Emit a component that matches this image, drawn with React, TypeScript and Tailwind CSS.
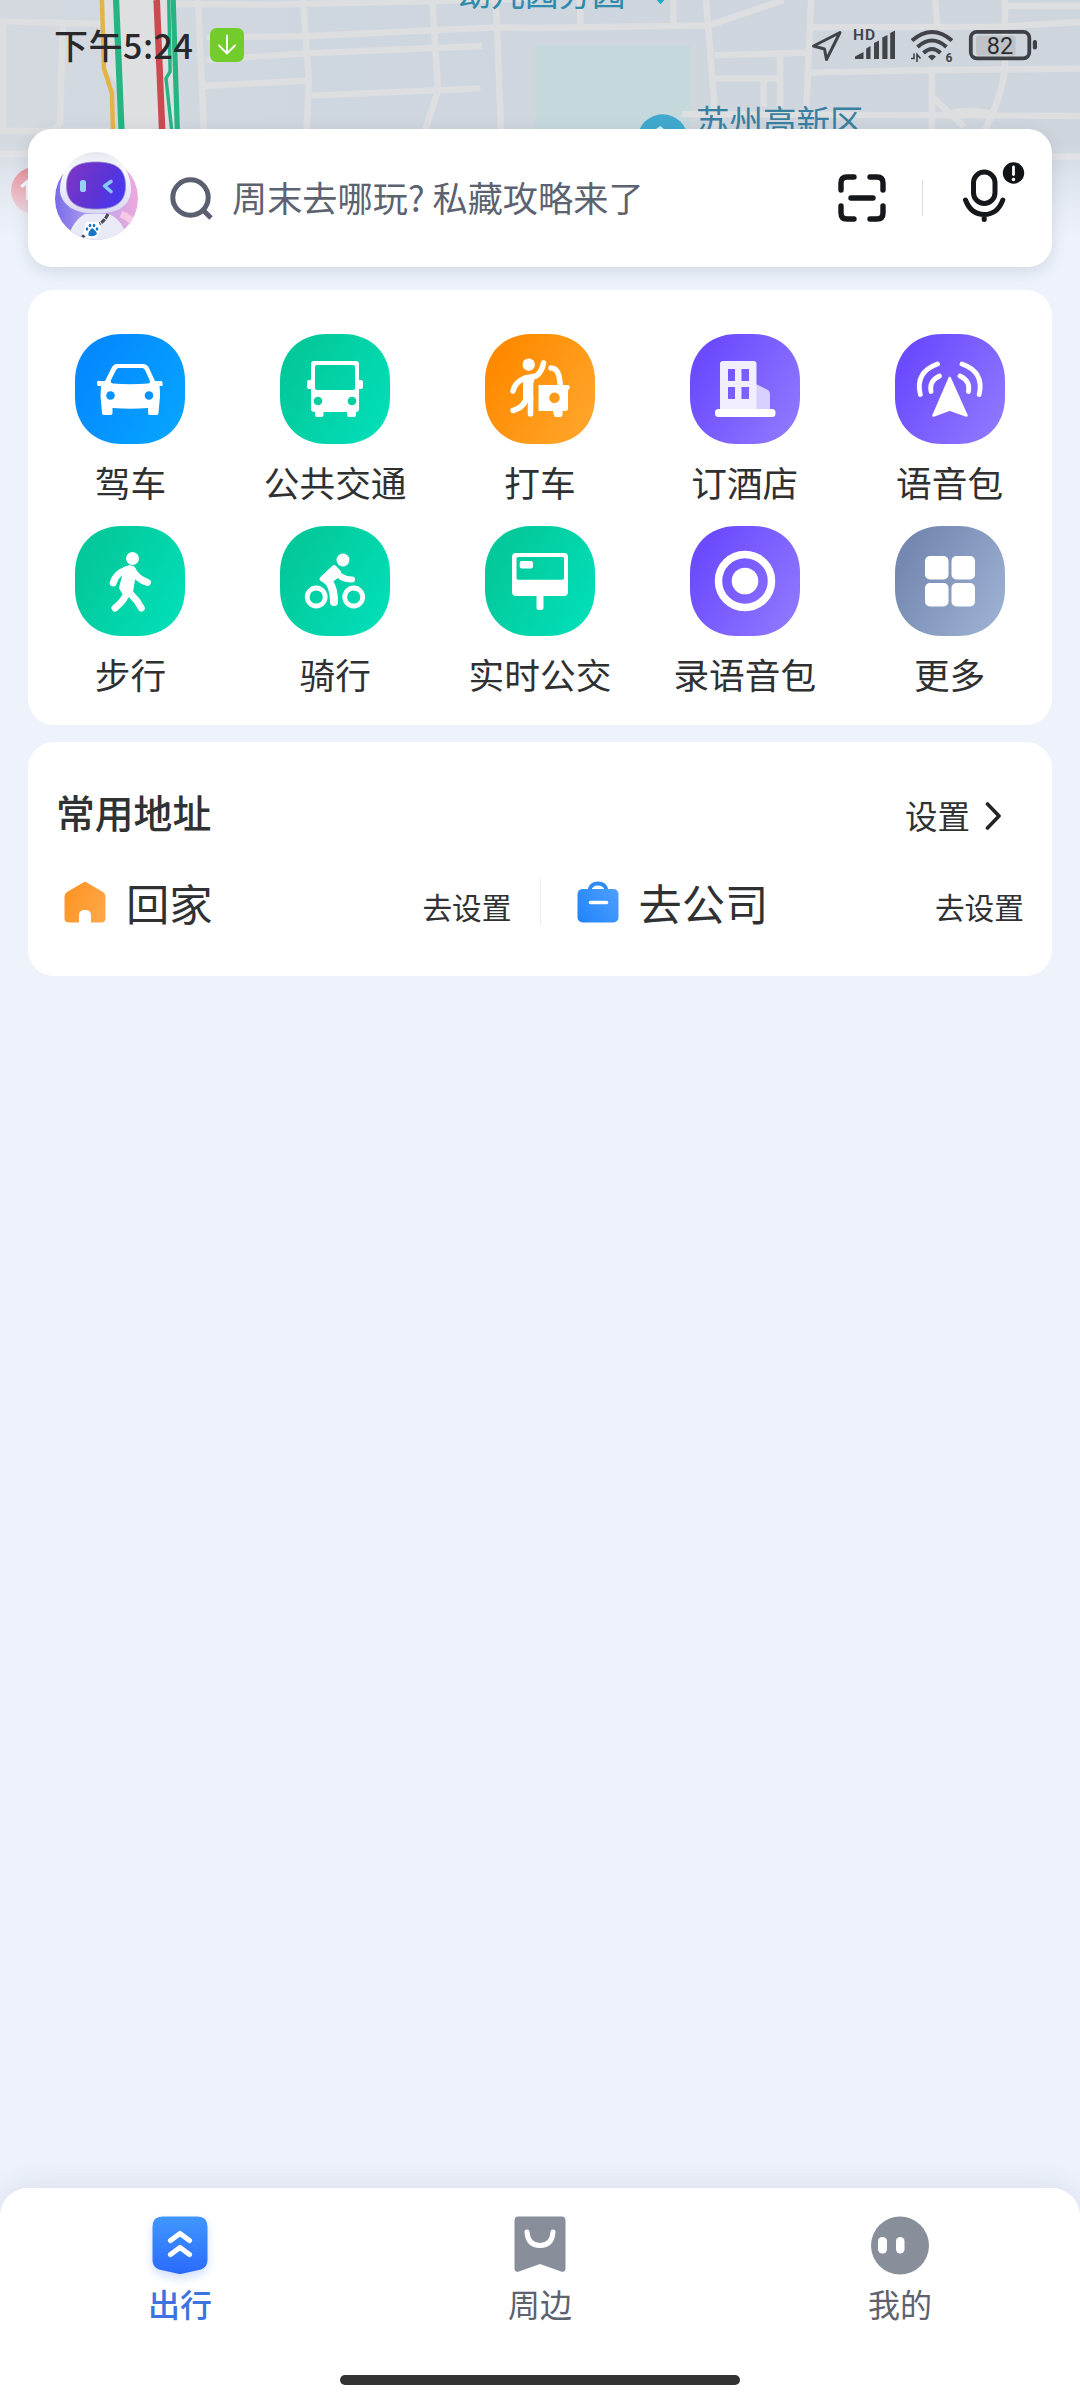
import type { ReactNode } from "react";

function MapBackdrop() {
  return (
    <div className="absolute inset-x-0 top-0 h-[280px] overflow-hidden">
      <svg className="block h-[280px] w-[1080px]" viewBox="0 0 3136 840" preserveAspectRatio="none">
        <defs>
          <linearGradient id="mapBase" x1="0" x2="1" y1="0" y2="0">
            <stop offset="0" stopColor="#d4d9df" />
            <stop offset="0.3" stopColor="#ced6df" />
            <stop offset="1" stopColor="#cfd5dd" />
          </linearGradient>
          <linearGradient id="mapFade" x1="0" x2="0" y1="0" y2="1">
            <stop offset="0" stopColor="#edf2fb" stopOpacity="0" />
            <stop offset="0.35" stopColor="#edf2fb" stopOpacity="0.5" />
            <stop offset="0.75" stopColor="#edf2fb" stopOpacity="0.85" />
            <stop offset="1" stopColor="#edf2fb" />
          </linearGradient>
        </defs>
        <rect width="3136" height="840" fill="url(#mapBase)" />
        <path d="M1546 128H2012V400H1546z" fill="#c5d8db" stroke="#d1d6dd" strokeWidth="12" />
        <path d="M300 0H510V400H350L345 260 300 200z" fill="#dedfe1" />

        {/* roads */}
        <g fill="none" stroke="#dddee0" strokeWidth="19">
          <path d="M0 64 300 72M8 70V400M182 75 175 370 150 393M0 393H320M0 462H120" />
          <path d="M510 12 800 14 1560 -4M575 0 592 400M880 0 897 240 890 400M600 112 900 108 1440 82 1560 84" />
          <path d="M600 180 890 160 1400 138M590 258 890 242M905 287 1395 265M1255 0 1272 270 1235 390" />
          <path d="M1440 0 1455 400M1560 84 2060 76 2275 0M2050 0 2080 390M1685 0V76M1955 0V76" />
          <path d="M2355 0 2342 320M2350 82 2900 80 3136 66M2075 166 2345 158M2075 236H2265M2265 166V320M2217 240V320" />
          <path d="M2350 218 2720 210 3136 206M1980 342 3136 348M2706 200V390M2715 0 2722 80M2918 0V210Q2905 300 2860 390M2706 290 2800 380M2740 345Q2820 320 2890 345M2918 18H3136M2900 470H3136" />
        </g>
        <path d="M296 0 302 205 325 280 328 395" fill="none" stroke="#e2b447" strokeWidth="13" />
        <path d="M337 0 353 395" stroke="#25b583" strokeWidth="18" />
        <path d="M455 0 471 395" stroke="#cb4a50" strokeWidth="19" />
        <path d="M503 0 515 395" stroke="#25b583" strokeWidth="15" />
        <path d="M490 0 494 215 482 235 499 395" fill="none" stroke="#25b583" strokeWidth="10" />
        <path d="M1907 0H1929L1918 13z" fill="#20a9c4" />
        <circle cx="1924" cy="415" r="72" fill="#40a9cd" />
        <path d="M1917 378 1932 390V400H1904V388z" fill="#d4edf5" />
        <circle cx="104" cy="572" r="72" fill="#e4525c" />
        <path d="M62 560 80 545V600" fill="none" stroke="#fff" strokeWidth="10" />
        <rect y="430" width="3136" height="290" fill="url(#mapFade)" />
        <rect y="719" width="3136" height="121" fill="#edf2fb" />
      </svg>
      <span className="absolute left-[458px] top-[-26px] text-[33.5px] leading-[36px] text-[#2d8bac]">幼儿园分园</span>
      <span className="absolute left-[696px] top-[102px] text-[33.5px] leading-[36px] text-[#397f9f]">苏州高新区</span>
    </div>
  );
}

function StatusBar() {
  return (
    <header className="relative flex h-[129px] items-start justify-between pl-[54px] pr-[41px] pt-7">
      <div className="flex items-center">
        <span className="w-[156px] whitespace-nowrap text-[34px] font-medium leading-[34px] tracking-[0.5px] text-[#29292b]">下午5:24</span>
        <svg width="34" height="34" viewBox="0 0 34 34">
          <rect width="34" height="34" rx="6.500" fill="#72cc2c" />
          <path d="M17 7.500V25M9 17.500 17 25.500 25 17.500" fill="none" stroke="#fff" strokeWidth="1.800" strokeLinecap="round" />
        </svg>
      </div>
      <svg width="228" height="36" viewBox="812 28 228 36" fontFamily="Roboto, sans-serif">
        <path d="M841 32.500 814.500 46 825.500 49 827.500 59.500z" fill="none" stroke="#414349" strokeWidth="3" strokeLinejoin="round" />
        <text x="854" y="40" fontSize="15.500" fontWeight="600" fill="#3f4147" letterSpacing="1">HD</text>
        <path d="M856 59V56.500L864.500 52V59zM867.200 59V48.500L871.500 46V59zM875 59V43L880 40.500V59zM883.300 59V37.500L888.500 35V59zM891.200 59V33L896 30.500V59z" fill="#414349" />
        <g fill="none" stroke="#414349" strokeWidth="4">
          <path d="M913 40.500Q933 23.500 953 40.500" />
          <path d="M918.500 47Q933 34 947.500 47" />
          <path d="M924.500 53Q933 45 941.500 53" />
        </g>
        <path d="M929 56.500Q933 53 937 56.500L933 60.500z" fill="#414349" />
        <path d="M912 58.500H915V53.500M918 62V54.500L921.500 58.500" fill="none" stroke="#414349" strokeWidth="1.600" />
        <text x="946.500" y="62" fontSize="12" fontWeight="700" fill="#414349">6</text>
        <rect x="977" y="35.500" width="39.500" height="20" rx="3" fill="#bfc2c7" />
        <rect x="971.800" y="31.800" width="58.500" height="26.500" rx="6" fill="none" stroke="#3e4046" strokeWidth="3.800" />
        <rect x="1033.800" y="40" width="4.200" height="9.500" rx="2" fill="#3e4046" />
        <text x="1001" y="54" fontSize="23.500" textAnchor="middle" fill="#2b2c30">82</text>
      </svg>
    </header>
  );
}

function Avatar() {
  return (
    <svg className="-mt-1" width="84" height="88" viewBox="0 0 84 88">
      <defs>
        <linearGradient id="avatarBg" x1="0" x2="1">
          <stop offset="0" stopColor="#776be9" />
          <stop offset="0.45" stopColor="#b4a4ef" />
          <stop offset="1" stopColor="#efa9dc" />
        </linearGradient>
        <linearGradient id="visor" x1="0" x2="1" y1="0.3" y2="0.7">
          <stop offset="0" stopColor="#7a35c6" />
          <stop offset="0.6" stopColor="#5b34d6" />
          <stop offset="1" stopColor="#4638f5" />
        </linearGradient>
        <linearGradient id="helmet" x1="0" x2="0" y1="0" y2="1">
          <stop offset="0" stopColor="#e4e8ee" />
          <stop offset="0.3" stopColor="#f9faff" />
          <stop offset="1" stopColor="#d9d8f1" />
        </linearGradient>
        <clipPath id="avatarClip">
          <circle cx="41.500" cy="46.500" r="41.500" />
        </clipPath>
      </defs>
      <g clipPath="url(#avatarClip)">
        <rect width="84" height="88" fill="url(#avatarBg)" />
        <path d="M12 88Q18 68 30 62H54Q68 68 73 88z" fill="#e8ebf5" />
        <path d="M53 62Q49 70 44 72M27 85 32 82" fill="none" stroke="#4a4859" strokeWidth="3" strokeDasharray="5 1" />
        <path d="M66 62Q76 66 80 74" fill="none" stroke="#f6c9e7" strokeWidth="7" />
      </g>
      <path d="M41.500 0C63 0 76 18 76 38 75 56 60 61.500 41.500 61.500S8 56 5 40C4 18 20 0 41.500 0z" fill="url(#helmet)" />
      <path d="M41 10C60 10 70.500 16 70.500 34 70.500 52 58 57 41 57S11.500 52 11.500 34C11.500 16 22 10 41 10z" fill="url(#visor)" stroke="#8f86c9" strokeWidth="0.800" />
      <rect x="25" y="28" width="6" height="12" rx="2.500" fill="#95d3fb" />
      <path d="M56 29.500 49.500 34 56 39.500" fill="none" stroke="#85c8ff" strokeWidth="3.600" strokeLinecap="round" strokeLinejoin="round" />
      <g fill="#1675c9">
        <path d="M31 70H44L46 77 41 86H32L28 82z" fill="#fff" />
        <path d="M37 76Q41.500 79 42 82 38 85.500 33.500 83.500 32.500 80 37 76z" />
        <ellipse cx="32" cy="77" rx="1.300" ry="1.800" />
        <ellipse cx="35" cy="73.500" rx="1.300" ry="1.800" />
        <ellipse cx="39" cy="73.500" rx="1.300" ry="1.800" />
        <ellipse cx="42" cy="77" rx="1.300" ry="1.800" />
      </g>
    </svg>
  );
}

function SearchBar() {
  return (
    <section className="relative mx-7 flex h-[138px] items-center rounded-[24px] bg-white pl-[27px] pr-[26px] shadow-[0_4px_16px_rgba(60,75,100,0.15)]">
      <Avatar />
      <svg className="ml-[31px]" width="44" height="44" viewBox="170 176 44 44" fill="none" stroke="#5a6070" strokeWidth="5">
        <circle cx="190.500" cy="197.500" r="17.700" />
        <path d="M202.500 209.500 211 218" />
      </svg>
      <span className="-mt-0.5 ml-[18px] flex-1 whitespace-nowrap text-[35.2px] leading-[44px] text-[#5c6270]">周末去哪玩? 私藏攻略来了</span>
      <svg className="-mt-px" width="48" height="48" viewBox="0 0 48 48" fill="none" stroke="#15171a" strokeWidth="5.400" strokeLinecap="round">
        <path d="M3 16V9Q3 3 9 3H16M32 3H39Q45 3 45 9V16M45 32V39Q45 45 39 45H32M16 45H9Q3 45 3 39V32M13 24H35" />
      </svg>
      <div className="ml-9 mr-10 h-9 w-px bg-[#d9dce0]" />
      <svg className="-mt-3" width="63" height="62" viewBox="963 162 63 62" fill="none" stroke="#15171a" strokeWidth="5" strokeLinecap="round">
        <rect x="973.500" y="173" width="21.500" height="31.500" rx="10.750" />
        <path d="M965.500 201Q971 215.500 984.200 215.500T1002.800 201M984.200 215.500V220.500" />
        <circle cx="1013.500" cy="174" r="10.700" fill="#111416" stroke="none" />
        <path d="M1013.500 168V175.500" stroke="#fff" strokeWidth="2.800" />
        <circle cx="1013.500" cy="180.500" r="1.700" fill="#fff" stroke="none" />
      </svg>
    </section>
  );
}

type Shortcut = { label: string; from: string; to: string; icon: ReactNode };

const GREEN = { from: "#03c89a", to: "#02dfb8" };
const PURPLE = { from: "#6c4bff", to: "#9078ff" };

const shortcuts: Shortcut[] = [
  {
    label: "驾车",
    from: "#0489ff",
    to: "#06a4ff",
    icon: (
      <>
        <path fillRule="evenodd" d="M42 30H68Q72 30 74 34L80 47H86Q88 47 87.500 52H84.500Q85 56 85 62L83.500 79Q83.500 81 81.500 81H75Q73 81 73 79V74Q55 75.500 37.500 74V79Q37.500 81 35.500 81H29Q27 81 27 79L25.500 62 26 52H23Q22 52 22 49T24 47H30L36.500 34Q38.500 30 42 30zM44 34Q42 34 41 36L36 46Q35 49 38 49.500 55 51 73 49.500 76 49 74.500 46L70 36Q69 34 67 34z" fill="#fff" />
        <g fill="#0494ff">
          <circle cx="35.500" cy="61.500" r="4.300" />
          <circle cx="74" cy="61.500" r="4.300" />
        </g>
      </>
    ),
  },
  {
    label: "公共交通",
    ...GREEN,
    icon: (
      <>
        <path fillRule="evenodd" d="M34 27H76Q79 27 79 30V46H81Q83 46 83 48V53Q83 55 81 55H79V75Q79 78 76 78V81Q76 83 74 83H69Q67 83 67 81V78H43.500V81Q43.500 83 41.500 83H37Q35 83 35 81V78Q31 78 31 75V55H29Q27 55 27 53V48Q27 46 29 46H31V30Q31 27 34 27zM37 31Q35 31 35 33V54Q35 56 37 56H73Q75 56 75 54V33Q75 31 73 31z" fill="#fff" />
        <g fill="#03ce9f">
          <circle cx="38" cy="67" r="4.300" />
          <circle cx="72" cy="67" r="4.300" />
        </g>
      </>
    ),
  },
  {
    label: "打车",
    from: "#ff8a00",
    to: "#ffa62b",
    icon: (
      <>
        <circle cx="43.700" cy="30.700" r="6.200" fill="#fff" />
        <g fill="none" stroke="#fff" strokeLinecap="round" strokeLinejoin="round" strokeWidth="5.500">
          <path d="M58.500 29Q57 38 51 42L40 44Q30 48 28 57" />
          <path d="M42 60Q41 73 28 76.500M45.500 62V80" />
          <path d="M66 34Q72 34 74 42L75.500 52" />
        </g>
        <path d="M38 43 51 40 48.300 50V68H38z" fill="#fff" />
        <path fillRule="evenodd" d="M53.500 51H83Q85 51 84.500 55L83 56V75Q83 77 81 77H77.500V81Q77.500 83 75.500 83H71Q69 83 69 81L68 77H53.500zM69.500 58.500A5.200 5.200 0 1 0 69.500 69 5.200 5.200 0 1 0 69.500 58.500z" fill="#fff" />
      </>
    ),
  },
  {
    label: "订酒店",
    ...PURPLE,
    icon: (
      <>
        <path d="M66 50 78 56Q80 57.500 80 60V76H66z" fill="#d7d0ff" />
        <path fillRule="evenodd" d="M33 27H63.500Q66.500 27 66.500 30V76H30V30Q30 27 33 27zM38 35V47H45V35zM51.500 35V47H59V35zM38 53V65H45V53zM51.500 53V65H59V53z" fill="#f1eeff" />
        <rect x="25" y="75" width="60.500" height="8" rx="3.500" fill="#fff" />
      </>
    ),
  },
  {
    label: "语音包",
    ...PURPLE,
    icon: (
      <>
        <path d="M54.700 44 71.500 81.500 54.700 75.500 38.500 81.500z" fill="#fff" stroke="#fff" strokeWidth="2.500" strokeLinejoin="round" />
        <g fill="none" stroke="#fff" strokeWidth="4.800" strokeLinecap="round">
          <path d="M42.500 30Q20 38 25.300 60.500M67 30Q89.500 38 84.200 60.500" />
          <path d="M44.500 42Q34 47 36 57.500M65 42Q75.500 47 73.500 57.500" />
        </g>
      </>
    ),
  },
  {
    label: "步行",
    ...GREEN,
    icon: (
      <>
        <circle cx="57.500" cy="32.500" r="6.500" fill="#fff" />
        <path d="M49 42 55 40 60 43 59 54 57 66 48 67 45 62 48 50z" fill="#fff" stroke="#fff" strokeWidth="2" strokeLinejoin="round" />
        <g fill="none" stroke="#fff" strokeWidth="7" strokeLinecap="round" strokeLinejoin="round">
          <path d="M50 44.500Q41 47 38.200 57M57 43.500Q62 53 72.500 56.500M52 66Q50 74 40 82M53 65 62 75 66.300 82" />
        </g>
      </>
    ),
  },
  {
    label: "骑行",
    ...GREEN,
    icon: (
      <>
        <circle cx="63" cy="34" r="6.500" fill="#fff" />
        <g fill="none" stroke="#fff" strokeLinecap="round" strokeLinejoin="round">
          <circle cx="36.200" cy="71" r="9" strokeWidth="4.800" />
          <circle cx="73.700" cy="71" r="9" strokeWidth="4.800" />
          <path d="M55 44Q60 53.500 72 53.500" strokeWidth="6" />
          <path d="M45 52.500Q54 58 54 76" strokeWidth="8" />
        </g>
        <path d="M54 41 41.500 53 48 57 56 51 59 46z" fill="#fff" stroke="#fff" strokeWidth="4" strokeLinejoin="round" />
      </>
    ),
  },
  {
    label: "实时公交",
    ...GREEN,
    icon: (
      <>
        <path fillRule="evenodd" d="M31 27H79Q83 27 83 31V66Q83 70 79 70H58.500V82Q58.500 84 56.500 84H53.500Q51.500 84 51.500 82V70H31Q27 70 27 66V31Q27 27 31 27zM33 31Q31.500 31 31.500 32.500V52Q31.500 53.700 33 53.700H77.500Q79 53.700 79 52V32.500Q79 31 77.500 31z" fill="#fff" />
        <rect x="34.700" y="35" width="13.300" height="7.500" rx="2" fill="#fff" />
      </>
    ),
  },
  {
    label: "录语音包",
    ...PURPLE,
    icon: (
      <>
        <circle cx="55" cy="55" r="26.500" fill="none" stroke="#fff" strokeWidth="7.500" />
        <circle cx="55" cy="55" r="13.300" fill="#fff" />
      </>
    ),
  },
  {
    label: "更多",
    from: "#7488b1",
    to: "#9db1d3",
    icon: (
      <g fill="#fff">
        <rect x="30" y="30" width="23.500" height="23.500" rx="5" />
        <rect x="56.500" y="30" width="23.500" height="23.500" rx="5" />
        <rect x="30" y="57" width="23.500" height="23.500" rx="5" />
        <rect x="56.500" y="57" width="23.500" height="23.500" rx="5" />
      </g>
    ),
  },
];

function ShortcutGrid() {
  return (
    <section className="relative mx-7 mt-[23px] grid h-[435px] grid-cols-5 content-start rounded-[26px] bg-white pt-11">
      {shortcuts.map((item, i) => (
        <div key={item.label} className="flex h-48 flex-col items-center">
          <svg width="110" height="110" viewBox="0 0 110 110">
            <defs>
              <linearGradient id={`tile${i}`} x1="0" x2="1" y1="0.2" y2="0.8">
                <stop offset="0.1" stopColor={item.from} />
                <stop offset="1" stopColor={item.to} />
              </linearGradient>
            </defs>
            <path d="M47 0H63C91 0 110 19 110 47V63C110 91 91 110 63 110H47C19 110 0 91 0 63V47C0 19 19 0 47 0z" fill={`url(#tile${i})`} />
            {item.icon}
          </svg>
          <span className="mt-4 whitespace-nowrap text-[35.7px] leading-[44px] text-[#2f3032]">{item.label}</span>
        </div>
      ))}
    </section>
  );
}

function Addresses() {
  return (
    <section className="relative mx-7 mt-[17px] h-[234px] rounded-[26px] bg-white pt-[43px]">
      <div className="flex h-[52px] items-center justify-between pl-[28px] pr-[49px]">
        <h2 className="text-[38.8px] font-medium leading-[52px] text-[#303133]">常用地址</h2>
        <div className="flex items-center pt-2">
          <span className="text-[32.5px] leading-[44px] text-[#303133]">设置</span>
          <svg className="ml-[15px] mt-px" width="18" height="30" viewBox="0 0 18 30">
            <path d="M2.500 3 14 15 2.500 27" fill="none" stroke="#222426" strokeWidth="3.600" strokeLinecap="round" strokeLinejoin="round" />
          </svg>
        </div>
      </div>
      <div className="mt-10 flex h-[50px] items-center">
        <div className="flex flex-1 items-center pl-9 pr-7">
          <svg width="42" height="42" viewBox="0 0 42 42">
            <defs>
              <linearGradient id="home" x1="0" x2="1" y1="0.2" y2="0.7">
                <stop offset="0" stopColor="#ff9322" />
                <stop offset="1" stopColor="#ffa747" />
              </linearGradient>
            </defs>
            <path d="M18 2.200Q21 0 24 2.200L39 11Q41.500 12.500 41.500 15.500V37Q41.500 41.500 37 41.500H27V34Q27 29 21 29T15 34V41.500H5Q.5 41.500 .5 37V15.500Q.5 12.500 3 11z" fill="url(#home)" />
          </svg>
          <span className="ml-5 flex-1 text-[43.3px] leading-[50px] text-[#303133]">回家</span>
          <span className="pt-2.5 text-[29.7px] leading-10 text-[#303133]">去设置</span>
        </div>
        <div className="h-12 w-px bg-[#ebecee]" />
        <div className="flex flex-1 items-center pl-9 pr-7">
          <svg width="42" height="42" viewBox="0 0 42 42">
            <defs>
              <linearGradient id="work" x1="0" x2="1" y1="0.8" y2="0.2">
                <stop offset="0" stopColor="#2385fb" />
                <stop offset="1" stopColor="#4c9dff" />
              </linearGradient>
            </defs>
            <path d="M12.500 9Q14 2.500 21 2.500T29.500 9" fill="none" stroke="#2e8cf5" strokeWidth="3.800" />
            <rect x="0.500" y="8" width="41" height="33.500" rx="5" fill="url(#work)" />
            <path d="M13.500 21.500H29.500" stroke="#fff" strokeWidth="3.600" strokeLinecap="round" />
          </svg>
          <span className="ml-5 flex-1 text-[43.3px] leading-[50px] text-[#303133]">去公司</span>
          <span className="pt-2.5 text-[29.7px] leading-10 text-[#303133]">去设置</span>
        </div>
      </div>
    </section>
  );
}

function TabBar() {
  return (
    <nav className="relative mt-auto flex h-[212px] flex-col rounded-t-[28px] bg-white shadow-[0_-4px_28px_rgba(90,95,140,0.12)]">
      <div className="flex pt-[22px]">
        <div className="flex flex-1 flex-col items-center">
          <svg className="overflow-visible drop-shadow-[0_5px_5px_rgba(50,110,255,0.22)]" width="70" height="70" viewBox="0 0 70 70">
            <defs>
              <linearGradient id="go" x1="0" x2="0" y1="0" y2="1">
                <stop offset="0" stopColor="#4097ff" />
                <stop offset="1" stopColor="#2a6bfc" />
              </linearGradient>
            </defs>
            <path d="M17.500 6.500H52.500Q62.500 6.500 62.500 16.500V50Q62.500 57 56 59.500L38 63.500Q35 64.500 32 63.500L14 59.500Q7.500 57 7.500 50V16.500Q7.500 6.500 17.500 6.500z" fill="url(#go)" />
            <path d="M25.500 30.500 35 23.500 44.500 30.500M25.500 44.500 35 37.500 44.500 44.500" fill="none" stroke="#fff" strokeWidth="5.200" strokeLinecap="round" strokeLinejoin="round" />
          </svg>
          <span className="mt-px text-[32px] font-medium leading-[44px] text-[#3c73e0]">出行</span>
        </div>
        <div className="flex flex-1 flex-col items-center">
          <svg width="70" height="70" viewBox="0 0 70 70">
            <path d="M13.500 6.500H56.500Q60.500 6.500 60.500 10.500V58Q60.500 63 56 61.500L35 54 14 61.500Q9.500 63 9.500 58V10.500Q9.500 6.500 13.500 6.500z" fill="#888e9a" />
            <path d="M22 22Q23 35.500 35 35.500T48 22" fill="none" stroke="#fff" strokeWidth="5" strokeLinecap="round" />
          </svg>
          <span className="mt-px text-[32px] leading-[44px] text-[#5c6270]">周边</span>
        </div>
        <div className="flex flex-1 flex-col items-center">
          <svg width="70" height="70" viewBox="0 0 70 70">
            <circle cx="35" cy="35.500" r="29" fill="#888e9a" />
            <rect x="13" y="27" width="9" height="16.500" rx="4.200" fill="#fff" />
            <rect x="31" y="27" width="8.500" height="16.500" rx="4.200" fill="#fff" />
          </svg>
          <span className="mt-px text-[32px] leading-[44px] text-[#5c6270]">我的</span>
        </div>
      </div>
      <div className="mx-auto mb-[15px] mt-auto h-2.5 w-[400px] rounded-full bg-[#333333]" />
    </nav>
  );
}

export default function App() {
  return (
    <div className="relative flex h-[2400px] w-[1080px] flex-col overflow-hidden bg-[#edf2fb] font-['Noto_Sans_CJK_SC',sans-serif]">
      <MapBackdrop />
      <StatusBar />
      <SearchBar />
      <ShortcutGrid />
      <Addresses />
      <TabBar />
    </div>
  );
}
